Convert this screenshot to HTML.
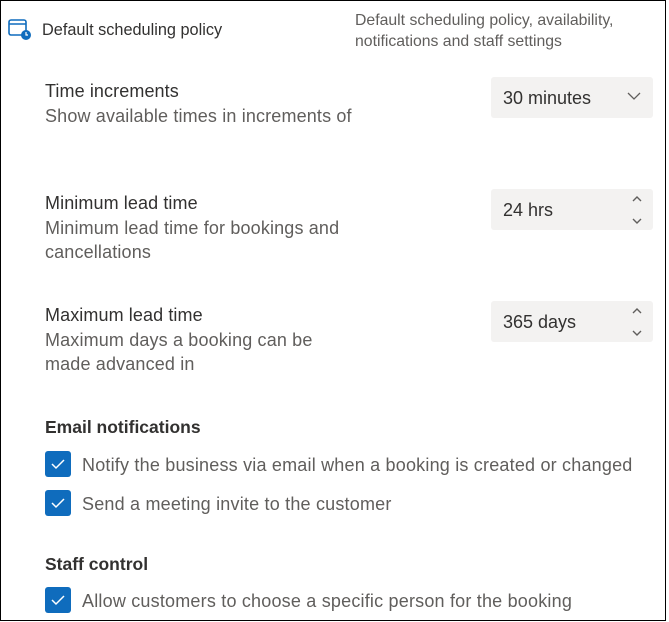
<!DOCTYPE html>
<html><head><style>
*{margin:0;padding:0;box-sizing:border-box}
body{width:669px;height:622px;background:#fff;font-family:"Liberation Sans",sans-serif;color:#323130;position:relative;overflow:hidden}
.frame{position:absolute;left:0;top:0;width:666px;height:621px;border:1px solid #000}
.a{position:absolute;white-space:nowrap}
.t{font-size:18px;color:#323130;letter-spacing:0.1px}
.s{font-size:18px;color:#605e5c;line-height:24px;letter-spacing:0.15px}
.box{position:absolute;left:491px;width:162px;height:41px;background:#f3f2f1;border-radius:3px;font-size:18px;color:#323130;padding:11px 0 0 12px}
.h{font-size:17.5px;font-weight:bold;color:#323130}
.cb{position:absolute;left:45px;width:26px;height:26px;background:#0f6cbd;border-radius:3px}
.cb svg{position:absolute;left:6px;top:7px}
.cl{font-size:18px;color:#605e5c;left:82px;letter-spacing:0.2px}
</style></head><body>
<div class="frame"></div>
<svg class="a" style="left:8px;top:19px" width="24" height="22" viewBox="0 0 24 22"><rect x="1" y="1" width="17" height="15" rx="2" fill="none" stroke="#0f6cbd" stroke-width="1.6"/><line x1="1" y1="5" x2="18" y2="5" stroke="#0f6cbd" stroke-width="1.6"/><circle cx="18" cy="16" r="5" fill="#0f6cbd"/><path d="M18 13v3h2" stroke="#fff" stroke-width="1.2" fill="none"/></svg>
<div class="a" style="left:42px;top:21px;font-size:16.3px;color:#323130">Default scheduling policy</div>
<div class="a" style="left:355px;top:10px;font-size:15.8px;color:#605e5c;line-height:21px">Default scheduling policy, availability,<br>notifications and staff settings</div>

<div class="a t" style="left:45px;top:81px">Time increments</div>
<div class="a s" style="left:45px;top:104px">Show available times in increments of</div>
<div class="box" style="top:77px">30 minutes<svg style="position:absolute;right:12px;top:15px" width="14" height="9" viewBox="0 0 14 9"><path d="M1 1l6 6 6-6" stroke="#605e5c" stroke-width="1.3" fill="none"/></svg></div>

<div class="a t" style="left:45px;top:193px">Minimum lead time</div>
<div class="a s" style="left:45px;top:216px">Minimum lead time for bookings and<br>cancellations</div>
<div class="box" style="top:189px">24 hrs<svg style="position:absolute;right:10px;top:6px" width="12" height="30" viewBox="0 0 12 30"><path d="M2 6l4-4 4 4M2 24l4 4 4-4" stroke="#605e5c" stroke-width="1.4" fill="none"/></svg></div>

<div class="a t" style="left:45px;top:305px">Maximum lead time</div>
<div class="a s" style="left:45px;top:328px">Maximum days a booking can be<br>made advanced in</div>
<div class="box" style="top:301px">365 days<svg style="position:absolute;right:10px;top:6px" width="12" height="30" viewBox="0 0 12 30"><path d="M2 6l4-4 4 4M2 24l4 4 4-4" stroke="#605e5c" stroke-width="1.4" fill="none"/></svg></div>

<div class="a h" style="left:45px;top:417px">Email notifications</div>
<div class="cb" style="top:451px"><svg width="14" height="12" viewBox="0 0 14 12"><path d="M1 6l4 4 8-8" stroke="#fff" stroke-width="1.5" fill="none"/></svg></div>
<div class="a cl" style="top:455px">Notify the business via email when a booking is created or changed</div>
<div class="cb" style="top:490px"><svg width="14" height="12" viewBox="0 0 14 12"><path d="M1 6l4 4 8-8" stroke="#fff" stroke-width="1.5" fill="none"/></svg></div>
<div class="a cl" style="top:494px">Send a meeting invite to the customer</div>

<div class="a h" style="left:45px;top:554px">Staff control</div>
<div class="cb" style="top:587px"><svg width="14" height="12" viewBox="0 0 14 12"><path d="M1 6l4 4 8-8" stroke="#fff" stroke-width="1.5" fill="none"/></svg></div>
<div class="a cl" style="top:591px">Allow customers to choose a specific person for the booking</div>
</body></html>
